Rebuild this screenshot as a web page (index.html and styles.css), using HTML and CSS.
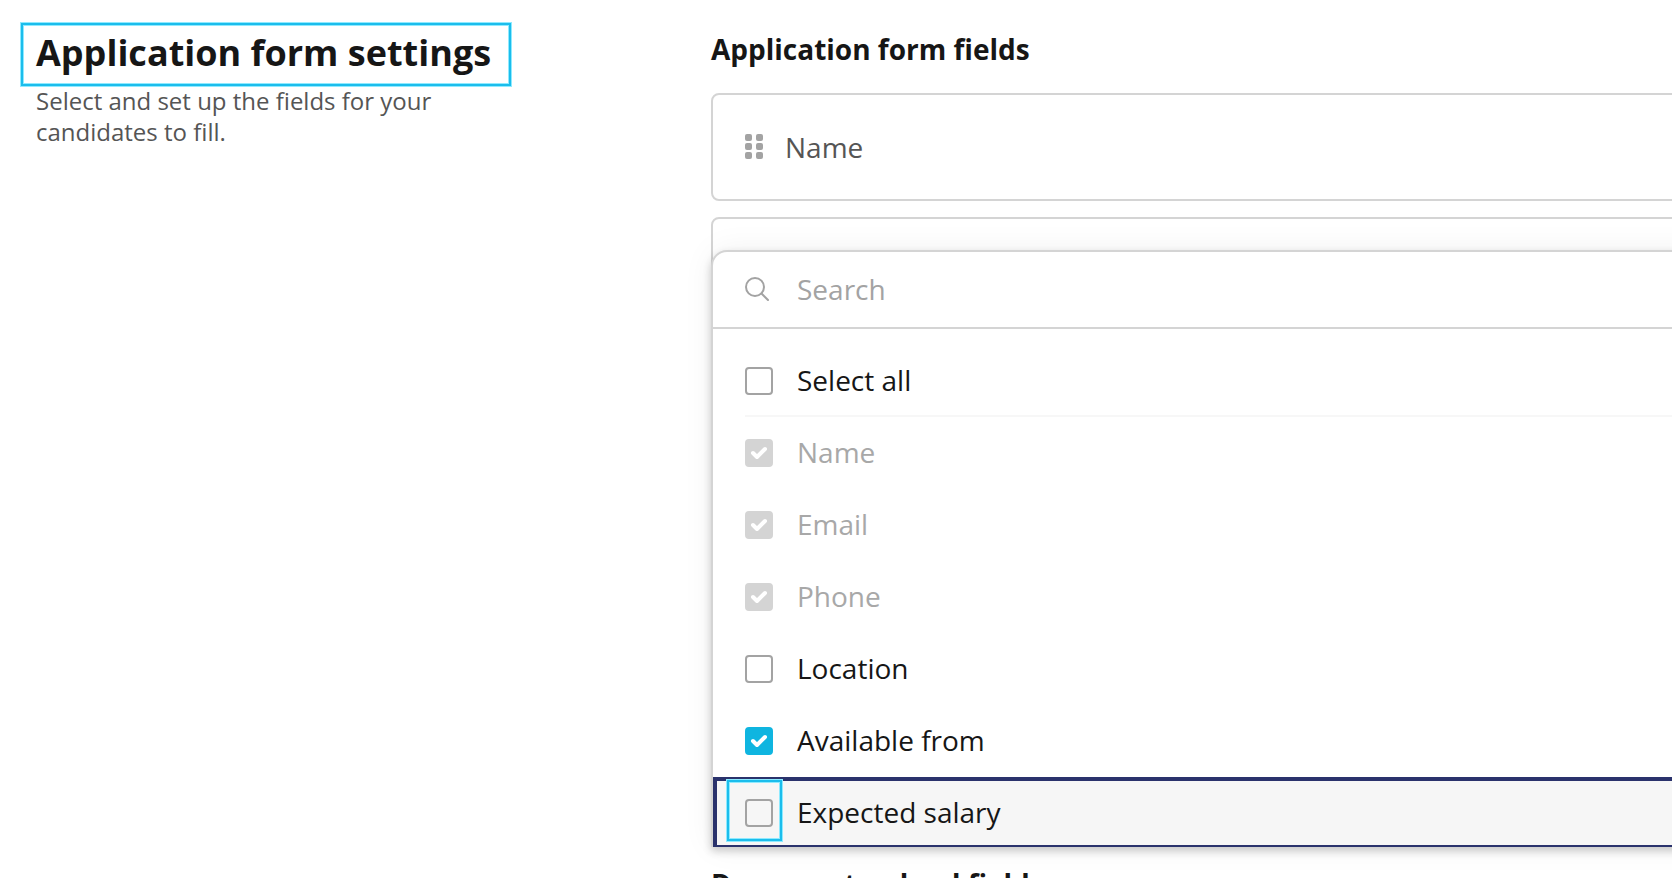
FILE: index.html
```html
<!DOCTYPE html>
<html lang="en">
<head>
<meta charset="utf-8">
<title>Application form settings</title>
<link rel="stylesheet" href="styles.css">
</head>
<body>
<main class="page">
  <header class="intro">
    <h1 class="intro-title">Application form settings</h1>
    <p class="intro-text">Select and set up the fields for your candidates to fill.</p>
  </header>
  <section class="fields">
    <h2 class="fields-title">Application form fields</h2>
    <div class="card">
      <svg class="grip" viewBox="0 0 18 26" aria-hidden="true">
        <rect x="0" y="0" width="7" height="7" rx="2"/><rect x="11" y="0" width="7" height="7" rx="2"/>
        <rect x="0" y="9" width="7" height="7" rx="2"/><rect x="11" y="9" width="7" height="7" rx="2"/>
        <rect x="0" y="18" width="7" height="7" rx="2"/><rect x="11" y="18" width="7" height="7" rx="2"/>
      </svg>
      <span>Name</span>
    </div>
    <div class="picker">
      <div class="card card-back"></div>
      <div class="menu">
        <label class="search">
          <svg class="search-icon" viewBox="0 0 24 24" aria-hidden="true"><circle cx="10" cy="10" r="9"/><path d="M16.5 16.5 23 23"/></svg>
          <input class="search-input" type="search" placeholder="Search" aria-label="Search">
        </label>
        <div class="options">
          <label class="option option-all"><input class="check" type="checkbox"><span class="option-text">Select all</span></label>
          <label class="option option-off"><span class="tick"><input class="check" type="checkbox" checked disabled><svg class="mark" viewBox="0 0 28 28" aria-hidden="true"><path d="M8 14 12 18 20 10"/></svg></span><span class="option-text">Name</span></label>
          <label class="option option-off"><span class="tick"><input class="check" type="checkbox" checked disabled><svg class="mark" viewBox="0 0 28 28" aria-hidden="true"><path d="M8 14 12 18 20 10"/></svg></span><span class="option-text">Email</span></label>
          <label class="option option-off"><span class="tick"><input class="check" type="checkbox" checked disabled><svg class="mark" viewBox="0 0 28 28" aria-hidden="true"><path d="M8 14 12 18 20 10"/></svg></span><span class="option-text">Phone</span></label>
          <label class="option"><input class="check" type="checkbox"><span class="option-text">Location</span></label>
          <label class="option"><span class="tick"><input class="check" type="checkbox" checked><svg class="mark" viewBox="0 0 28 28" aria-hidden="true"><path d="M8 14 12 18 20 10"/></svg></span><span class="option-text">Available from</span></label>
          <label class="option option-active"><span class="tick tick-marked"><input class="check" type="checkbox"></span><span class="option-text">Expected salary</span></label>
        </div>
      </div>
    </div>
    <h2 class="fields-title">Document upload fields</h2>
  </section>
</main>
</body>
</html>
```

FILE: styles.css
```css
* {
  box-sizing: border-box;
}

body {
  margin: 0;
  background: #fff;
  color: #161616;
  font-family: "Open Sans", "Noto Sans", sans-serif;
  font-size: 28px;
  line-height: 38px;
}

.page {
  display: grid;
  grid-template-columns: 711px minmax(0, 1fr);
  height: 100vh;
  overflow: hidden;
}

.intro {
  padding: 26px 200px 0 24px;
}

.intro-title {
  width: fit-content;
  margin: 0;
  padding: 3px 17px 6px 12px;
  box-shadow: 0 0 0 1px #8eeaff, 0 0 0 3px #1bbdec, 0 0 0 4px #8eeaff;
  font-size: 36px;
  line-height: 48px;
  white-space: nowrap;
}

.intro-text {
  max-width: 440px;
  margin: 2px 0 0;
  padding-left: 12px;
  color: #555;
  font-size: 24px;
  line-height: 31px;
}

.fields {
  margin-right: -40px;
  padding-top: 30px;
}

.fields-title {
  margin: 0 0 25px;
  font-size: 28px;
  line-height: 38px;
}

.card {
  display: flex;
  align-items: center;
  gap: 22px;
  min-height: 108px;
  margin-bottom: 16px;
  padding: 0 32px;
  border: 2px solid #d4d4d4;
  border-radius: 8px;
  color: #555;
}

.grip {
  width: 18px;
  height: 26px;
  fill: #a3a3a3;
}

.picker {
  display: grid;
  margin-bottom: 18px;
}

.card-back,
.menu {
  grid-area: 1 / 1;
}

.card-back {
  align-self: start;
}

.menu {
  z-index: 1;
  margin-top: 33px;
  overflow: hidden;
  border: 2px solid #d4d4d4;
  border-bottom: 0;
  border-radius: 16px 0 0 0;
  background: #fff;
  box-shadow: 0 4px 8px rgba(0, 0, 0, .2), 0 0 32px rgba(0, 0, 0, .06);
}

.search {
  display: flex;
  align-items: center;
  gap: 28px;
  height: 77px;
  padding: 0 32px 2px;
  border-bottom: 2px solid #d4d4d4;
}

.search-icon {
  width: 24px;
  height: 24px;
  fill: none;
  stroke: #a3a3a3;
  stroke-width: 2;
  stroke-linecap: round;
}

.search-input {
  flex: 1;
  min-width: 0;
  padding: 0;
  border: 0;
  outline: 0;
  background: none;
  color: inherit;
  font: inherit;
}

.search-input::placeholder {
  color: #a3a3a3;
  opacity: 1;
}

.options {
  padding-top: 16px;
}

.option {
  display: flex;
  align-items: center;
  gap: 24px;
  height: 72px;
  padding: 0 32px;
}

.option-text {
  padding-bottom: 2px;
}

.option-all {
  background: linear-gradient(#f7f7f7, #f7f7f7) 32px 100% / 100% 2px no-repeat;
}

.option-off {
  color: #a8a8a8;
}

.option-active {
  height: 70px;
  border: solid #2a326c;
  border-width: 4px 4px 2px;
  padding: 0 28px;
  background: #f6f6f6;
}

.tick {
  display: grid;
}

.check {
  appearance: none;
  width: 28px;
  height: 28px;
  margin: 0;
  border: 2px solid #a3a3a3;
  border-radius: 4px;
}

.check:checked {
  border-color: #0fb5e0;
  background: #0fb5e0;
}

.check:disabled {
  border-color: #d4d4d4;
  background: #d4d4d4;
}

.tick .check,
.mark {
  grid-area: 1 / 1;
}

.mark {
  width: 28px;
  height: 28px;
  fill: none;
  stroke: #fff;
  stroke-width: 4;
  stroke-linecap: round;
  stroke-linejoin: round;
}

.tick-marked {
  position: relative;
}

.tick-marked::after {
  content: "";
  position: absolute;
  inset: -19px -9px -14px -18px;
  border: 2px solid #1bbdec;
  box-shadow: 0 0 0 1px #8eeaff, inset 0 0 0 1px #8eeaff;
}
```
